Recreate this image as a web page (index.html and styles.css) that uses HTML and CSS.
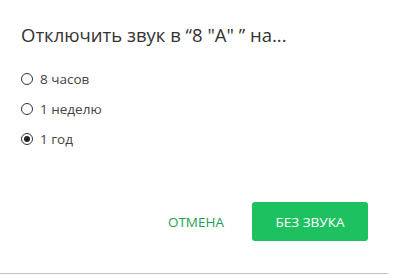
FILE: index.html
```html
<!DOCTYPE html>
<html lang="ru">
  <head>
    <meta charset="UTF-8" />
    <title>Отключить звук</title>
    <link rel="stylesheet" href="styles.css">
  </head>
  <body>
    <div class="dialog">
      <h2 class="title">Отключить звук в “8 "A" ” на...</h2>

      <!-- Duration options -->
      <div class="options">
        <label class="option"><span class="radio"></span>8 часов</label>
        <label class="option"><span class="radio"></span>1 неделю</label>
        <label class="option checked"><span class="radio"></span>1 год</label>
      </div>

      <div class="actions">
        <button class="cancel">ОТМЕНА</button>
        <button class="mute">БЕЗ ЗВУКА</button>
      </div>
    </div>
  </body>
</html>
```

FILE: styles.css
```css
:root {
  --green: #1ec160;
  --green-text: #1d9e52;
  --text: #333;
}

* {
  box-sizing: border-box;
}

body {
  margin: 0;
  background: #fff;
  font-family: "Open Sans", "Noto Sans", sans-serif;
  color: var(--text);
}

.dialog {
  width: 388px;
  height: 274px;
  padding: 22px 20px 0 21px;
  border-bottom: 1px solid #c2c2c2;
  display: flex;
  flex-direction: column;
}

.title {
  margin: 0;
  font-size: 18.5px;
  font-weight: normal;
  line-height: 26px;
  color: #333;
}

.options {
  margin-top: 21px;
  display: flex;
  flex-direction: column;
  gap: 10px;
}

.option {
  display: flex;
  align-items: center;
  height: 20px;
  font-size: 13.5px;
  color: #444;
}

.radio {
  width: 12px;
  height: 12px;
  margin-right: 7px;
  border: 1.3px solid #333;
  border-radius: 50%;
  display: flex;
  align-items: center;
  justify-content: center;
}

.checked .radio::after {
  content: "";
  width: 6px;
  height: 6px;
  border-radius: 50%;
  background: #222;
}

.actions {
  margin-top: auto;
  margin-bottom: 32px;
  display: flex;
  justify-content: flex-end;
  align-items: center;
}

button {
  font-family: inherit;
  font-size: 13.5px;
  border: none;
  cursor: pointer;
}

.cancel {
  background: none;
  color: var(--green-text);
  padding: 0;
  margin-right: 28px;
}

.mute {
  width: 116px;
  height: 39px;
  border-radius: 3px;
  background: var(--green);
  color: #fff;
}
```
